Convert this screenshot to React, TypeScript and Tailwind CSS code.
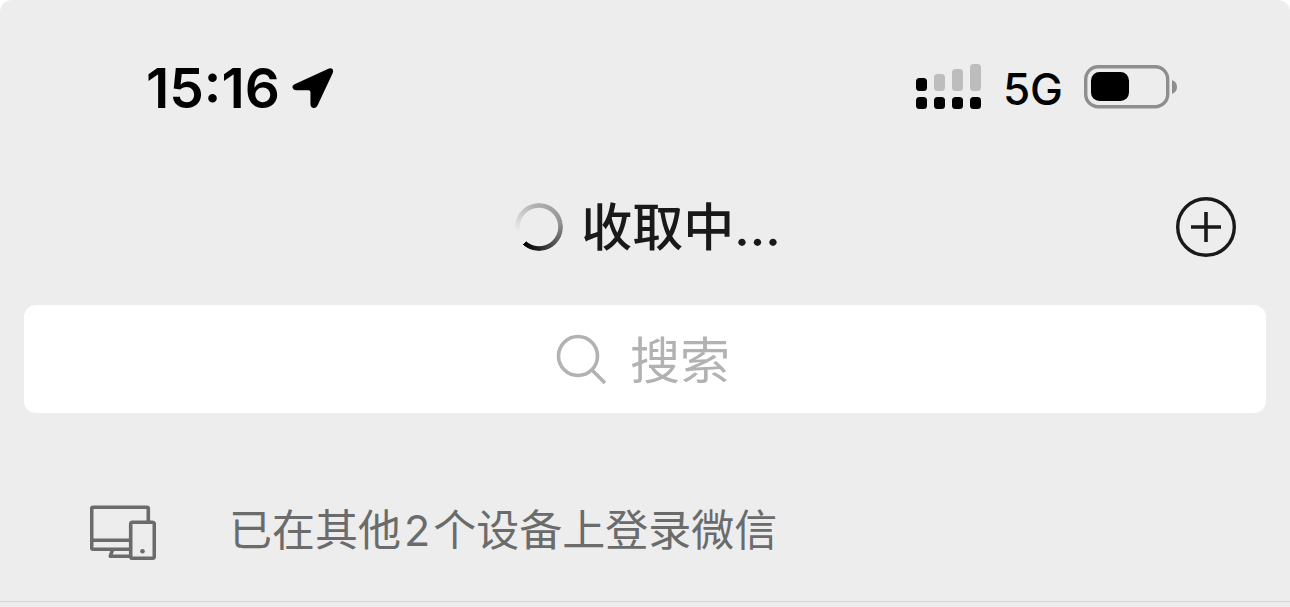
import React from "react";

function LocationArrow() {
  return (
    <svg className="h-[42px] w-[42px]" viewBox="0 0 43 42" aria-hidden="true">
      <path
        d="M3.2 17 L37.2 1.2 Q40.2 0 41.6 1.8 Q42.8 3.4 41.6 6 L26 39.2 Q24.4 42 21.8 41.5 Q18.9 40.9 18.9 37.5 V25.4 Q18.9 23.4 17 23.4 H4.6 Q1.2 23.2 0.5 20.6 Q0.1 18.3 3.2 17 Z"
        fill="#000"
      />
    </svg>
  );
}

function DualSignal() {
  return (
    <svg className="h-[46px] w-[66px]" viewBox="0 0 66 46" aria-hidden="true">
      <g fill="#bdbdbd">
        <rect x="18" y="10" width="11" height="17" rx="3.5" />
        <rect x="36" y="5" width="11" height="22" rx="3.5" />
        <rect x="54" y="0" width="11" height="27" rx="3.5" />
      </g>
      <g fill="#000">
        <rect x="0" y="14" width="11" height="13" rx="3.5" />
        <rect x="0" y="33" width="11" height="12" rx="3.5" />
        <rect x="18" y="33" width="11" height="12" rx="3.5" />
        <rect x="36" y="33" width="11" height="12" rx="3.5" />
        <rect x="54" y="33" width="11" height="12" rx="3.5" />
      </g>
    </svg>
  );
}

function Battery() {
  return (
    <svg className="h-[44px] w-[93px]" viewBox="0 0 93 44" aria-hidden="true">
      <rect x="1.7" y="1.7" width="82" height="40" rx="12.5" fill="none" stroke="#8e8e8e" strokeWidth="3.4" />
      <rect x="7" y="7" width="38" height="29" rx="8.5" fill="#000" />
      <path d="M88 15 Q93 17 93 22 Q93 27 88 29 Z" fill="#8e8e8e" />
    </svg>
  );
}

function Devices() {
  return (
    <svg className="h-[60px] w-[66px]" viewBox="0 -4 66 60" fill="none" stroke="#6b6b6b" strokeWidth="3.6" strokeLinejoin="round" aria-hidden="true">
      <path d="M58.3 16 V3.5 Q58.3 2.2 57 2.2 H3 Q1.7 2.2 1.7 3.5 V43 Q1.7 44.3 3 44.3 H40" />
      <path d="M1.7 35.2 H40" />
      <path d="M22.5 45 L20.3 51.2 H40" />
      <rect x="40.7" y="17.2" width="23.6" height="36" rx="1.8" />
      <circle cx="52.5" cy="46.2" r="2.3" fill="#6b6b6b" stroke="none" />
    </svg>
  );
}

export default function App() {
  return (
    <div className="bg-white font-[Inter,'Noto_Sans_CJK_SC',sans-serif]">
      <div className="rounded-t-xl bg-[#ededed]">
        <div className="flex h-44 items-center justify-between pr-[113px] pl-[146px] text-black">
          <div className="flex items-center gap-3">
            <time className="text-[55px] leading-none font-semibold">15:16</time>
            <LocationArrow />
          </div>
          <div className="flex items-center gap-[21px] pb-0.5">
            <DualSignal />
            <span className="pt-1 text-[44px] leading-none font-medium">5G</span>
            <Battery />
          </div>
        </div>

        <header className="grid h-[102px] grid-cols-[1fr_auto_1fr] items-center px-[54px]">
          <div className="col-start-2 flex items-center gap-[18px] pl-1.5">
            <span
              role="status"
              aria-label="收取中"
              className="size-12 rounded-full bg-[conic-gradient(from_222deg,#0000_0%,#0000_10%,#00000040_35%,#00000060_60%,#000000a0_75%,#000000e0_90%,#000_100%)] [mask:radial-gradient(closest-side,transparent_78%,#000_82%)]"
            />
            <h1 className="text-[51px] leading-none font-medium text-[#191919]">收取中...</h1>
          </div>
          <button type="button" aria-label="添加" className="justify-self-end">
            <svg className="size-[60px]" viewBox="0 0 60 60" fill="none" stroke="#191919" aria-hidden="true">
              <circle cx="30" cy="30" r="28.3" strokeWidth="3.4" />
              <path d="M30 15 V45 M15 30 H45" strokeWidth="3.6" />
            </svg>
          </button>
        </header>

        <div className="px-6 pt-[27px]">
          <label className="flex h-[108px] items-center justify-center gap-6 rounded-xl bg-white pr-1">
            <svg className="size-[50px]" viewBox="0 0 50 50" fill="none" stroke="#b2b2b2" strokeWidth="3.6" aria-hidden="true">
              <circle cx="22" cy="22" r="19.5" />
              <path d="M35.5 35.5 L49 49" />
            </svg>
            <input
              type="search"
              aria-label="搜索"
              placeholder="搜索"
              className="field-sizing-content pb-1 text-[50px] leading-none text-[#191919] outline-none placeholder:text-[#b2b2b2]"
            />
          </label>
        </div>

        <a href="#devices" className="mt-12 flex h-[141px] items-center gap-[73px] border-b border-[#d5d5d5] pl-[90px] text-[43px] text-[#6b6b6b]">
          <Devices />
          <span className="pb-0.5 leading-none">
            已在其他<span className="mx-[3px]">2</span>个设备上登录微信
          </span>
        </a>
        <div className="h-[5px]" />
      </div>
    </div>
  );
}
